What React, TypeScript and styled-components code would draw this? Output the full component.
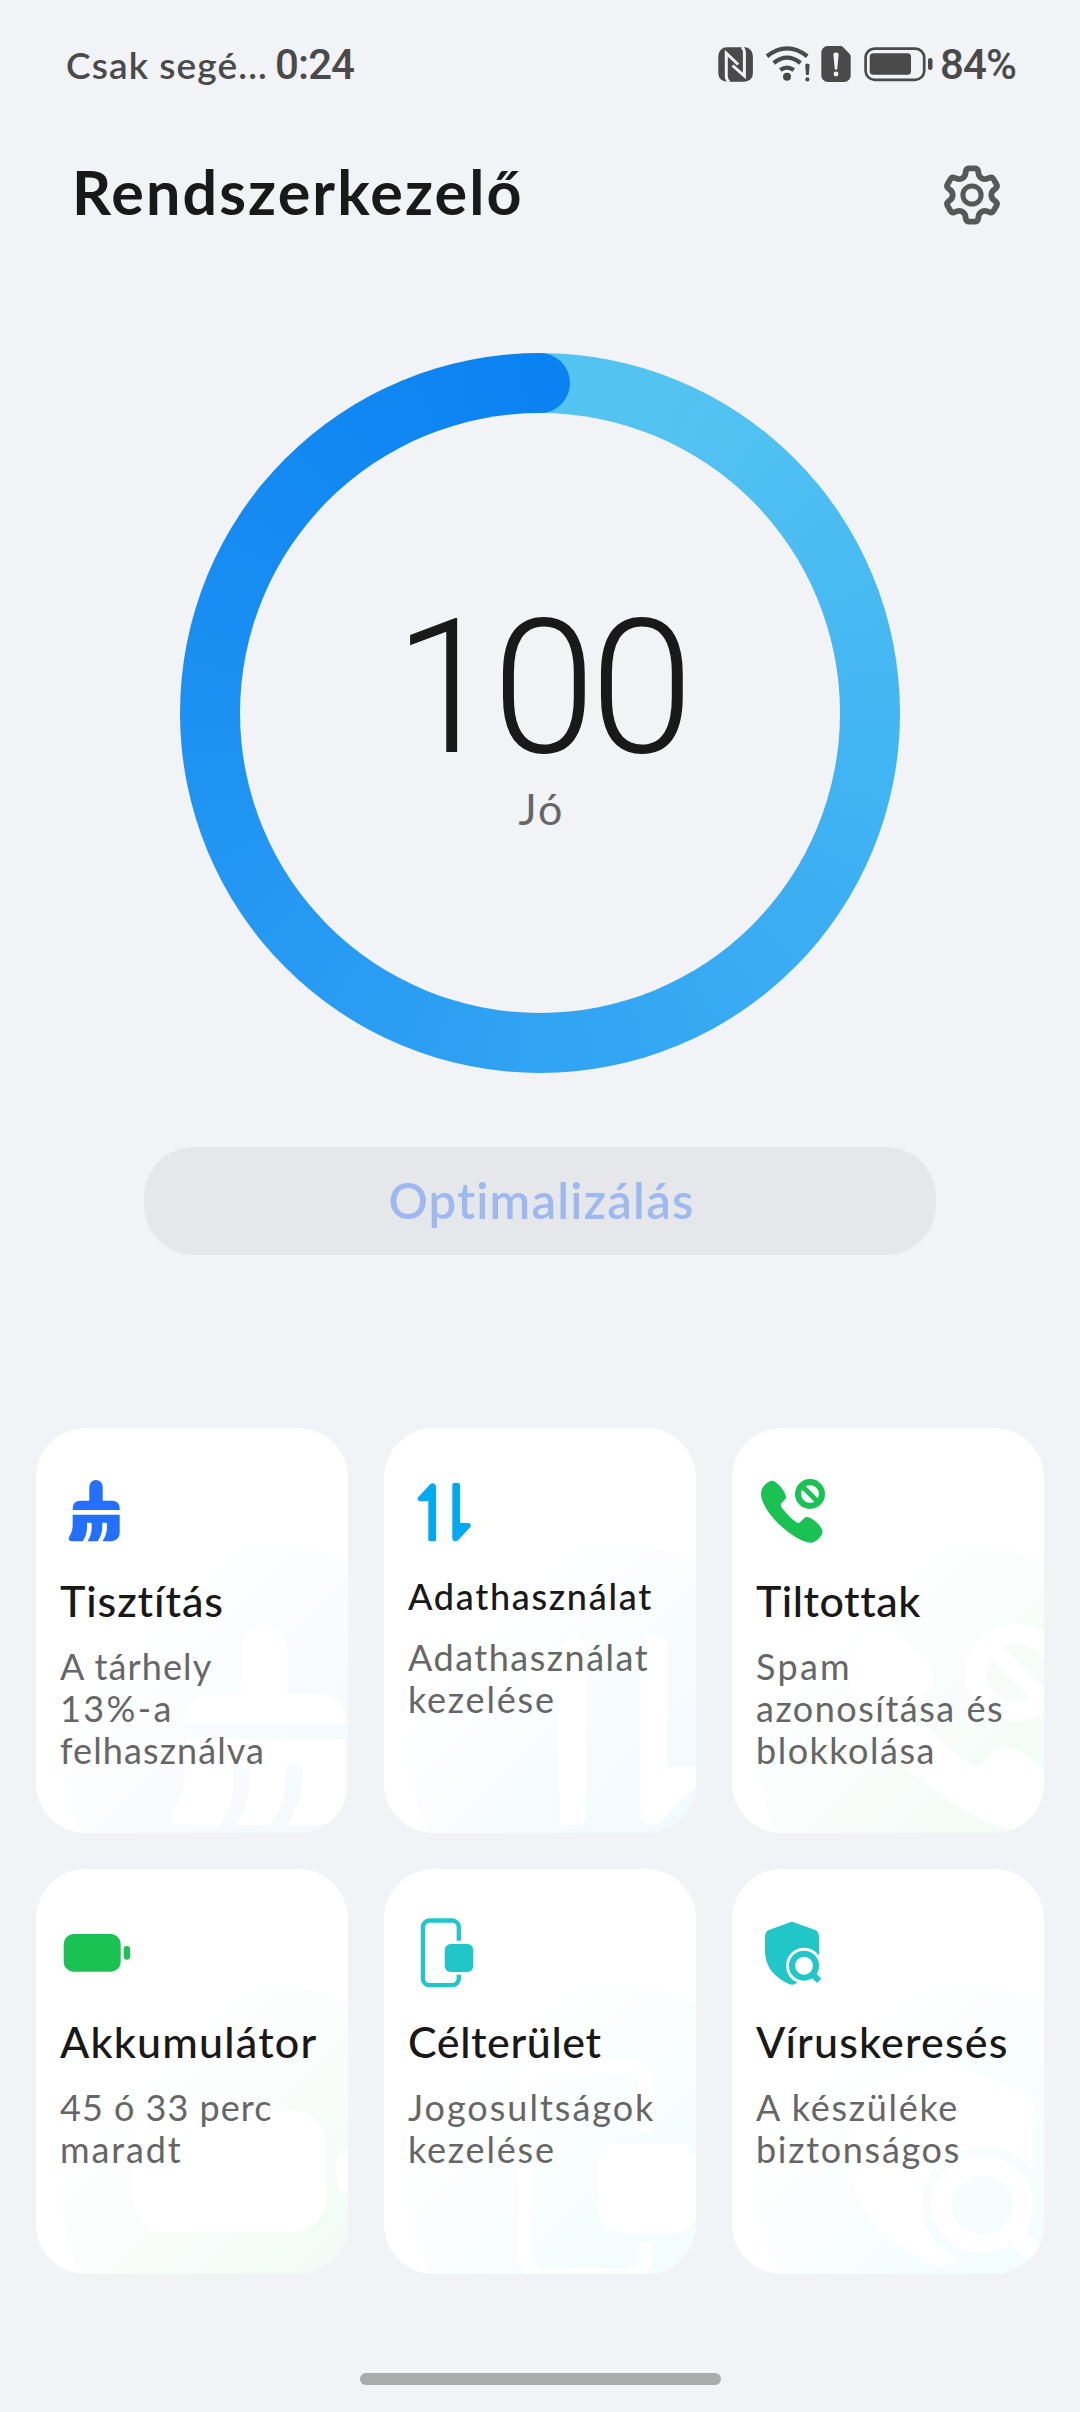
import React from "react";
import styled, { createGlobalStyle } from "styled-components";

const GlobalStyle = createGlobalStyle`
  * { box-sizing: border-box; }
  body { margin: 0; background: #f1f3f7; }
`;

const Screen = styled.div`
  width: 1080px;
  height: 2412px;
  display: flex;
  flex-direction: column;
  align-items: center;
  overflow: hidden;
  background: #f1f3f7;
  color: #191919;
  font-family: Lato, "Open Sans", sans-serif;
  font-variant-ligatures: none;
  white-space: nowrap;
`;

const StatusBar = styled.header`
  width: 100%;
  height: 130px;
  padding: 40px 66px 40px 66px;
  display: flex;
  align-items: center;
  color: #4a4a4a;
`;

const Carrier = styled.span`
  width: 209px;
  font-size: 37px;
  line-height: 50px;
  font-weight: 600;
  letter-spacing: 1.1px;
`;

const StatusNumber = styled.span`
  font-family: Roboto, sans-serif;
  font-size: 42px;
  line-height: 50px;
  font-weight: 500;
  letter-spacing: -0.9px;
`;

const StatusIcons = styled.div`
  display: flex;
  align-items: center;
  gap: 6px;
  margin-left: auto;
  margin-right: -2px;
`;

const TitleBar = styled.div`
  width: 100%;
  height: 130px;
  padding: 0 72px 0 72px;
  display: flex;
  align-items: center;
  justify-content: space-between;
`;

const Title = styled.h1`
  margin: 0 0 6px;
  font-size: 61px;
  line-height: 74px;
  font-weight: 700;
  letter-spacing: 2.1px;
`;

const Ring = styled.div`
  position: relative;
  width: 720px;
  height: 720px;
  margin-top: 93px;
  padding: 60px;
  border-radius: 50%;
  flex: none;
  background: conic-gradient(
    #54c5f2 0deg,
    #52c3f1 25deg,
    #43b6f3 90deg,
    #30a3f3 180deg,
    #1c91f2 270deg,
    #0a82f2 360deg
  );
`;

const RingCap = styled.div`
  position: absolute;
  top: 0;
  left: 359px;
  width: 31px;
  height: 60px;
  border-radius: 0 30px 30px 0;
  background: #0a82f2;
`;

const RingCore = styled.div`
  width: 600px;
  height: 600px;
  padding-top: 185px;
  border-radius: 50%;
  background: #f1f3f7;
  display: flex;
  flex-direction: column;
  align-items: center;
`;

const Score = styled.div`
  padding-left: 2px;
  font-family: Roboto, sans-serif;
  font-weight: 300;
  font-size: 187px;
  line-height: 182px;
  letter-spacing: -5.5px;
`;

const Verdict = styled.div`
  margin-top: 3px;
  padding-left: 3px;
  font-size: 43px;
  line-height: 52px;
  letter-spacing: 2px;
  color: #666;
`;

const OptimizeButton = styled.button`
  width: 792px;
  height: 108px;
  margin: 74px 0 173px;
  padding: 0 0 2px 3px;
  flex: none;
  border: 0;
  border-radius: 50px;
  background: #e5e7eb;
  color: #9eb9f0;
  font: 600 49px/106px Lato, sans-serif;
  font-variant-ligatures: none;
  letter-spacing: 1.2px;
`;

const Grid = styled.main`
  display: grid;
  grid-template-columns: repeat(3, 312px);
  grid-auto-rows: 405px;
  gap: 36px;
`;

const Card = styled.section`
  position: relative;
  overflow: hidden;
  border-radius: 50px;
  padding: 48px 24px 0;
  background: #fff;
`;

const Backdrop = styled.div<{ $tint: string }>`
  position: absolute;
  left: 24px;
  top: 116px;
  width: 408px;
  height: 400px;
  border-radius: 50%;
  background: linear-gradient(135deg, #fff 18%, ${(p) => p.$tint} 68%);
`;

const Ghost = styled.div<{ $dx: number; $dy: number }>`
  position: absolute;
  left: ${(p) => 105.5 + p.$dx}px;
  top: ${(p) => 185.5 + p.$dy}px;
  width: 245px;
  height: 233px;
  color: #fff;
  svg { width: 100%; height: 100%; }
`;

const CardBody = styled.div`
  position: relative;
  display: flex;
  flex-direction: column;
`;

const IconBox = styled.div<{ $color: string }>`
  width: 72px;
  height: 72px;
  margin-bottom: 27px;
  color: ${(p) => p.$color};
`;

const CardTitle = styled.h2<{ $small?: boolean; $track: number }>`
  margin: 0 0 18px;
  font-size: ${(p) => (p.$small ? 36 : 43)}px;
  line-height: ${(p) => (p.$small ? 43 : 52)}px;
  font-weight: 500;
  letter-spacing: ${(p) => p.$track}px;
`;

const Line = styled.span<{ $track: number }>`
  font-size: 36px;
  line-height: 42px;
  color: #666;
  letter-spacing: ${(p) => p.$track}px;
`;

const HomeIndicator = styled.div`
  width: 361px;
  height: 12px;
  margin-top: 99px;
  flex: none;
  border-radius: 6px;
  background: #a9abad;
`;

const Glyph = ({ children }: { children: React.ReactNode }) => (
  <svg viewBox="0 0 72 72" width="72" height="72" preserveAspectRatio="none" display="block" overflow="visible" fill="currentColor">
    {children}
  </svg>
);

const BrushIcon = () => (
  <Glyph>
    <path d="M12.7 34V32.5Q12.7 24.7 20.5 24.7H29.3V10.7a6.7 6.7 0 0 1 13.4 0V24.7H51.9Q59.7 24.7 59.7 32.5V34Z" />
    <path d="M12.7 38.7H59.7V57a8.3 8.3 0 0 1-8.3 8.3H42.5C45.5 60.500 47 56.500 47 50V48q0-1.300-1.300-1.300H42.300V50C42.300 56 41 60 37.700 65.300H27.500C30.500 60.500 31.700 56.500 31.700 50V48q0-1.300-1.300-1.300H27V50C27 56 26 60 22.700 65.300H12C9 65.300 8 63 9.200 60.800C12 56 12.700 53 12.700 48Z" />
  </Glyph>
);

const ARROW = "M28 10.500V63.500q0 1.800-1.800 1.800h-4.100q-1.800 0-1.800-1.800V25.300H12.300c-2.600 0-3.700-2.600-1.900-4.400L22.200 8.200C24.400 6 28 7.400 28 10.500Z";

const DataIcon = () => (
  <Glyph>
    <path d={ARROW} />
    <path d={ARROW} transform="rotate(180 36.15 36.2)" />
  </Glyph>
);

const BlockedIcon = () => (
  <Glyph>
    <path d="M5 17.500C5 11 12 4.700 16 4.700C20.500 4.700 30 15.500 30 21C30 24 24.700 26.500 24.700 29.300C24.700 32 39 47 42.300 47C45 47 47.500 41 51 41C56 41 66.500 50.500 66.500 55.500C66.500 60 60 66.700 55 66.700C39 66.700 5 36 5 17.500Z" />
    <circle cx="54" cy="18" r="12" fill="none" stroke="currentColor" strokeWidth="6" />
    <path d="M46.500 10.500L61.500 25.500" stroke="currentColor" strokeWidth="5" />
  </Glyph>
);

const BatteryIcon = () => (
  <Glyph>
    <rect x="3.700" y="17" width="57" height="37.700" rx="10" />
    <rect x="63.700" y="29" width="6.300" height="13.700" rx="3" />
  </Glyph>
);

const TargetIcon = () => (
  <Glyph>
    <path
      d="M50.800 23.700V10A6.500 6.500 0 0 0 44.300 3.500H21.400A6.500 6.500 0 0 0 14.900 10V61.600A6.500 6.500 0 0 0 21.400 68.100H44.300A6.500 6.500 0 0 0 50.800 61.600V57.700"
      fill="none"
      stroke="currentColor"
      strokeWidth="4.300"
    />
    <rect x="36.700" y="27" width="28.600" height="28" rx="6" />
  </Glyph>
);

const ShieldIcon = () => (
  <Glyph>
    <path d="M33.500 5.400Q36 4.300 38.500 5.400L58.500 12.700Q63 14.500 63 19.500V38.700A18 18 0 0 0 30 48.700A18 18 0 0 0 41.500 65.500L38 67.200Q36 68.200 33.800 67.300C18 60 9 50 9 33V19.500Q9 14.500 13.500 12.700Z" />
    <circle cx="48" cy="48.700" r="12" fill="none" stroke="currentColor" strokeWidth="6" />
    <path d="M56 56.700L63.200 63.800" stroke="currentColor" strokeWidth="6" />
  </Glyph>
);

const NfcIcon = () => (
  <svg width="41" height="50" viewBox="5 0 41 50">
    <rect x="5.300" y="7.300" width="34.600" height="34.500" rx="8.500" fill="#4a4a4a" />
    <path d="M16.200 42Q13.300 40 13.300 36V13.200L25.200 24.500M29 7Q31.400 9.500 31.400 12V36L19.500 25.500" fill="none" stroke="#f1f3f7" strokeWidth="3" />
  </svg>
);

const WifiIcon = () => (
  <svg width="50" height="50" viewBox="52 0 50 50" fill="none" stroke="#4a4a4a" strokeWidth="4.300" strokeLinecap="butt">
    <path d="M54 16.200Q74 0.500 94.300 16.200M60.700 23Q74 12.200 87.500 23M67.300 30Q74 25.300 80.800 30" />
    <circle cx="74" cy="36.700" r="4" fill="#4a4a4a" stroke="none" />
    <path d="M92.200 25.500a2.200 2 0 0 1 4.400 0L95.800 35h-2.800Z" fill="#4a4a4a" stroke="none" />
    <circle cx="94.400" cy="39.400" r="2.100" fill="#4a4a4a" stroke="none" />
  </svg>
);

const SimAlertIcon = () => (
  <svg width="37" height="50" viewBox="108 0 37 50">
    <path d="M114.500 6H127.500Q129 6 130 7L136.700 14Q137.700 15 137.700 16.500V35.500A6.500 6.500 0 0 1 131.200 42H114.800A6.500 6.500 0 0 1 108.300 35.500V12.500A6.500 6.500 0 0 1 114.500 6Z" fill="#4a4a4a" />
    <path d="M120.400 15a2.600 2.400 0 0 1 5.200 0L124.200 29.500h-2.400Z" fill="#f1f3f7" />
    <circle cx="123" cy="34" r="2.400" fill="#f1f3f7" />
  </svg>
);

const StatusBattery = () => (
  <svg width="70" height="50" viewBox="865 40 70 50" fill="#4a4a4a">
    <rect x="866.600" y="48.600" width="58.600" height="31.200" rx="9" fill="none" stroke="#4a4a4a" strokeWidth="2.700" />
    <rect x="870.700" y="53.300" width="41.300" height="21.400" rx="3.500" />
    <rect x="929" y="58" width="4.500" height="12" rx="2.200" />
  </svg>
);

/* Closed outline of a six-toothed gear with softened corners. */
function gearPath() {
  const pts: [number, number][] = [];
  for (let i = 0; i < 6; i++) {
    const mid = -90 + i * 60;
    for (const [off, r] of [[-20.5, 19.6], [-12.5, 27.2], [12.5, 27.2], [20.5, 19.6]]) {
      const a = ((mid + off) * Math.PI) / 180;
      pts.push([30 + r * Math.cos(a), 30 + r * Math.sin(a)]);
    }
  }
  return (
    pts
      .map((p, i) => {
        const a = pts[(i + pts.length - 1) % pts.length];
        const b = pts[(i + 1) % pts.length];
        const near = ([x, y]: [number, number]) => {
          const d = Math.hypot(x - p[0], y - p[1]);
          return `${p[0] + ((x - p[0]) * 3.2) / d} ${p[1] + ((y - p[1]) * 3.2) / d}`;
        };
        return `${i ? "L" : "M"}${near(a)}Q${p[0]} ${p[1]} ${near(b)}`;
      })
      .join("") + "Z"
  );
}

const GearIcon = () => (
  <svg width="72" height="60" viewBox="-6 0 72 60" fill="none" stroke="#57585a">
    <path d={gearPath()} strokeWidth="5.800" strokeLinejoin="round" />
    <circle cx="30" cy="30" r="9.100" strokeWidth="5" />
  </svg>
);

type Item = {
  title: string;
  track: number;
  small?: boolean;
  lines: [string, number][];
  color: string;
  tint: string;
  Icon: () => React.ReactElement;
  dx?: number;
  dy?: number;
};

const items: Item[] = [
  { title: "Tisztítás", track: 0.9, lines: [["A tárhely", 1.1], ["13%-a", 2.4], ["felhasználva", 1.1]], color: "#256fff", tint: "#f3f9fe", Icon: BrushIcon },
  { title: "Adathasználat", track: 1.7, small: true, lines: [["Adathasználat", 1.5], ["kezelése", 1.8]], color: "#00a9f1", tint: "#f1fafe", Icon: DataIcon },
  { title: "Tiltottak", track: 0.5, lines: [["Spam", 2.3], ["azonosítása és", 1.5], ["blokkolása", 1.5]], color: "#19c252", tint: "#f2fbf6", Icon: BlockedIcon, dx: -6 },
  { title: "Akkumulátor", track: 1.2, lines: [["45 ó 33 perc", 1], ["maradt", 1.9]], color: "#19c252", tint: "#f2fbf6", Icon: BatteryIcon, dx: -22 },
  { title: "Célterület", track: 0.6, lines: [["Jogosultságok", 2], ["kezelése", 1.8]], color: "#20c6c8", tint: "#f2fdfc", Icon: TargetIcon, dx: -16 },
  { title: "Víruskeresés", track: 1.15, lines: [["A készüléke", 1.7], ["biztonságos", 1.7]], color: "#20c6c8", tint: "#f2fdfc", Icon: ShieldIcon, dx: -19, dy: -8 },
];

export default function App() {
  return (
    <Screen>
      <GlobalStyle />
      <StatusBar>
        <Carrier>Csak segé...</Carrier>
        <StatusNumber>0:24</StatusNumber>
        <StatusIcons>
          <NfcIcon />
          <WifiIcon />
          <SimAlertIcon />
          <StatusBattery />
          <StatusNumber>84%</StatusNumber>
        </StatusIcons>
      </StatusBar>
      <TitleBar>
        <Title>Rendszerkezelő</Title>
        <GearIcon />
      </TitleBar>
      <Ring>
        <RingCap />
        <RingCore>
          <Score>100</Score>
          <Verdict>Jó</Verdict>
        </RingCore>
      </Ring>
      <OptimizeButton>Optimalizálás</OptimizeButton>
      <Grid>
        {items.map(({ Icon, ...it }) => (
          <Card key={it.title}>
            <Backdrop $tint={it.tint} />
            <Ghost $dx={it.dx ?? 0} $dy={it.dy ?? 0}>
              <Icon />
            </Ghost>
            <CardBody>
              <IconBox $color={it.color}>
                <Icon />
              </IconBox>
              <CardTitle $small={it.small} $track={it.track}>{it.title}</CardTitle>
              {it.lines.map(([text, track]) => (
                <Line key={text} $track={track}>{text}</Line>
              ))}
            </CardBody>
          </Card>
        ))}
      </Grid>
      <HomeIndicator />
    </Screen>
  );
}
